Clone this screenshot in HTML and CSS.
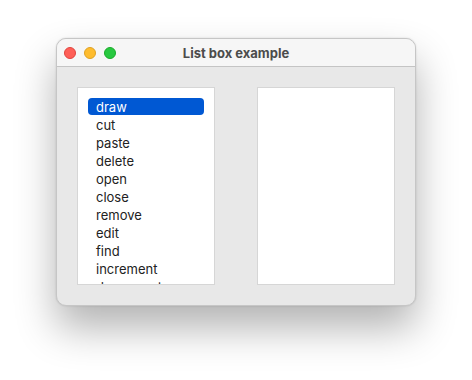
FILE: index.html
```html
<!DOCTYPE html>
<html>
<head>
<meta charset="utf-8">
<link rel="stylesheet" href="styles.css">
</head>
<body>
<div class="window">
  <div class="titlebar">
    <div class="lights">
      <span class="light red"></span>
      <span class="light yellow"></span>
      <span class="light green"></span>
    </div>
    <div class="title">List box example</div>
  </div>
  <div class="content">
    <div class="listbox">
      <div class="row selected">draw</div>
      <div class="row">cut</div>
      <div class="row">paste</div>
      <div class="row">delete</div>
      <div class="row">open</div>
      <div class="row">close</div>
      <div class="row">remove</div>
      <div class="row">edit</div>
      <div class="row">find</div>
      <div class="row">increment</div>
      <div class="row">decrement</div>
    </div>
    <div class="listbox"></div>
  </div>
</div>
</body>
</html>
```
FILE: styles.css
```css
html, body {
  margin: 0;
  padding: 0;
  background: #ffffff;
}
body {
  box-sizing: border-box;
  height: 380px;
  padding: 38px 0 0 56px;
  font-family: Inter, "Noto Sans", "Liberation Sans", sans-serif;
  overflow: hidden;
}
.window {
  width: 358px;
  height: 266px;
  border: 1px solid #c6c6c6;
  border-radius: 10px;
  background: #e8e8e8;
  box-shadow: 0 22px 40px rgba(0, 0, 0, 0.30), 0 0 2px rgba(0,0,0,0.15);
  overflow: hidden;
  display: flex;
  flex-direction: column;
}
.titlebar {
  flex: 0 0 auto;
  height: 27px;
  border-bottom: 1px solid #c4c4c4;
  background: #f6f6f6;
  position: relative;
  display: flex;
  align-items: center;
  justify-content: center;
}
.lights {
  position: absolute;
  left: 7px;
  top: 8px;
  display: flex;
  gap: 8px;
}
.light {
  width: 12px;
  height: 12px;
  border-radius: 50%;
  box-sizing: border-box;
}
.red { background: #fe5f57; border: 0.5px solid #e0443e; }
.yellow { background: #febc2e; border: 0.5px solid #dea123; }
.green { background: #28c840; border: 0.5px solid #1aab29; }
.title {
  font-size: 13px;
  font-weight: 700;
  color: #4c4c4c;
}
.content {
  flex: 1 1 auto;
  display: flex;
  gap: 42px;
  padding: 20px;
}
.listbox {
  flex: 0 0 auto;
  background: #ffffff;
  border: 1px solid #d6d6d6;
  padding: 10px;
  box-sizing: content-box;
  width: 116px;
  height: 176px;
  overflow: hidden;
}
.row {
  height: 18px;
  line-height: 19px;
  font-size: 13px;
  color: #222222;
  padding-left: 8px;
  box-sizing: border-box;
}
.row.selected {
  height: 17px;
  margin-bottom: 1px;
  background: #0058d3;
  color: #ffffff;
  border-radius: 4px;
}
```
